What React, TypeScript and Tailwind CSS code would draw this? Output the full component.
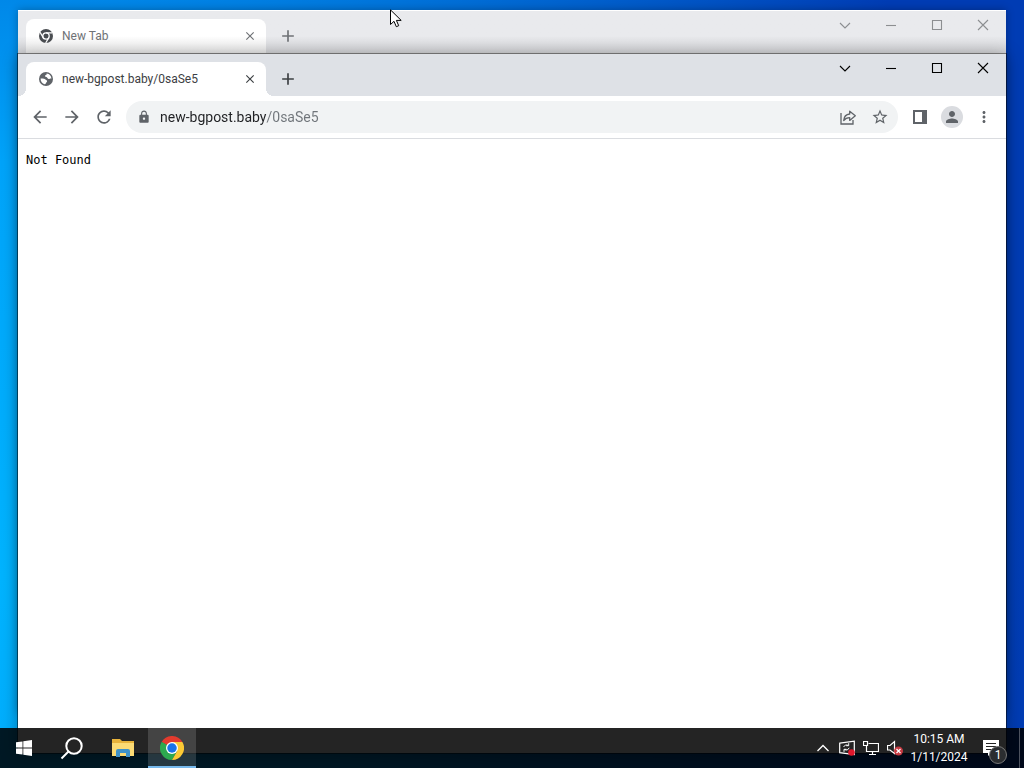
import type { ReactNode } from "react";
import {
  MdArrowBack,
  MdArrowForward,
  MdClose,
  MdAdd,
  MdLock,
  MdMoreVert,
  MdPerson,
  MdRefresh,
  MdStarBorder,
} from "react-icons/md";

function GlobeIcon() {
  return (
    <svg viewBox="0 0 16 16" className="size-4 text-[#5f6368]" fill="none">
      <circle cx="8" cy="8" r="7" fill="currentColor" />
      <path
        d="M2.600 7.600C4.500 7.200 6.300 7.300 7.200 8.300C7.700 9.200 9 9 9.100 10.100C9.200 11.200 8 11.400 7.800 12.300C7.700 13 7.300 13.400 6.600 13.200C4.300 12.700 2.400 10.500 2.600 7.600Z"
        fill="white"
      />
      <path
        d="M8.600 2.600C9 3.600 8.300 4 7.500 4.200C6.700 4.400 6.900 5.400 7.600 5.700C8.700 6.100 9.200 6.300 9.600 7.300C10 8.300 11.200 8.200 11.800 7.700C12.300 7.300 12.900 7.400 13.300 7.900C13.500 5.200 11.500 2.700 8.600 2.600Z"
        fill="white"
      />
    </svg>
  );
}

function ChromeMonoIcon() {
  return (
    <svg viewBox="0 0 16 16" className="size-4">
      <circle cx="8" cy="8" r="7" fill="#4a4d51" />
      <circle cx="8" cy="8" r="3.200" fill="#4a4d51" stroke="white" strokeWidth="1.300" />
      <path
        d="M8 4.800h6.300M5.200 9.600 2.100 4.200M10.800 9.600 7.700 15"
        stroke="white"
        strokeWidth="1.300"
      />
      <circle cx="8" cy="8" r="1.700" fill="#4a4d51" />
    </svg>
  );
}

function ChromeIcon() {
  return (
    <svg viewBox="0 0 48 48" className="size-6">
      <path d="M24 24 3.200 12A24 24 0 0 1 44.800 12Z" fill="#e33b2e" />
      <path d="M24 24V48A24 24 0 0 1 3.200 12Z" fill="#2da94f" />
      <path d="M13.600 30 3.200 12 24 24 34.400 30 24 48Z" fill="#2da94f" />
      <path d="M44.800 12H24L34.400 30 24 48A24 24 0 0 0 44.800 12Z" fill="#fcc934" />
      <circle cx="24" cy="24" r="12" fill="white" />
      <circle cx="24" cy="24" r="9.500" fill="#1a73e8" />
    </svg>
  );
}

function ShareIcon() {
  return (
    <svg viewBox="0 0 18 18" className="size-[18px]" fill="none" stroke="currentColor" strokeWidth="1.300">
      <path d="M2 5v11h12v-4" />
      <path d="M4.700 12.500C5 8.500 7 6.300 10.700 6V3.200L16.300 7.800l-5.600 4.600V9.600C8 9.600 6.200 10.400 4.700 12.500Z" strokeLinejoin="round" />
    </svg>
  );
}

function SidePanelIcon() {
  return (
    <svg viewBox="0 0 14 14" className="size-[14px]">
      <path d="M0 0h14v14H0ZM2 2v10h7V2Z" fill="currentColor" fillRule="evenodd" />
    </svg>
  );
}

function ToolButton({ label, children }: { label: string; children: ReactNode }) {
  return (
    <button
      aria-label={label}
      className="flex size-7 shrink-0 items-center justify-center rounded-full text-[#5f6368] hover:bg-black/5"
    >
      {children}
    </button>
  );
}

const captionButtons = [
  { label: "Search tabs", path: "M1 4l5 5 5-5" },
  { label: "Minimize", path: "M1 6.500h10" },
  { label: "Maximize", path: "M1.500 1.500h9v9h-9Z" },
  { label: "Close", path: "M1 1l10 10M11 1L1 11" },
];

function CaptionButtons() {
  return (
    <div className="ml-auto flex">
      {captionButtons.map((b) => (
        <button key={b.label} aria-label={b.label} className="flex h-7 w-[46px] items-center justify-center">
          <svg viewBox="0 0 12 12" className="size-3" fill="none" stroke="currentColor" strokeWidth="1.100">
            <path d={b.path} />
          </svg>
        </button>
      ))}
    </div>
  );
}

type TabStripProps = { title: string; icon: ReactNode; active?: boolean };

function TabStrip({ title, icon, active = false }: TabStripProps) {
  return (
    <div
      className={`flex h-[42px] pl-2 ${
        active ? "bg-[#dee1e6] text-black" : "bg-linear-to-b from-[#e9eaed] from-60% to-[#d2d3d6] text-[#8c8e91]"
      }`}
    >
      <div
        className={`relative mt-2 flex w-[240px] items-center rounded-t-lg pr-2 pl-3 ${
          active
            ? "bg-white text-[#3c4043] before:absolute before:bottom-0 before:-left-2 before:size-2 before:bg-[radial-gradient(circle_at_0_0,transparent_8px,white_8px)] after:absolute after:-right-2 after:bottom-0 after:size-2 after:bg-[radial-gradient(circle_at_100%_0,transparent_8px,white_8px)]"
            : "bg-linear-to-b from-white from-50% to-[#e8e8e8] text-[#6f7276]"
        }`}
      >
        {icon}
        <span className="ml-2 flex-1 truncate text-xs">{title}</span>
        <button aria-label={`Close ${title}`} className="flex size-4 items-center justify-center">
          <MdClose className="size-3.5" />
        </button>
      </div>
      <button
        aria-label="New tab"
        className={`mt-[11px] ml-2 flex size-7 items-center justify-center ${
          active ? "text-[#3c4043]" : "text-[#6f7276]"
        }`}
      >
        <MdAdd className="size-5" />
      </button>
      <CaptionButtons />
    </div>
  );
}

function Toolbar() {
  return (
    <div className="flex items-center gap-1 border-b border-[#dadce0] bg-white px-2 py-[5px]">
      <ToolButton label="Back">
        <MdArrowBack className="size-5" />
      </ToolButton>
      <ToolButton label="Forward">
        <MdArrowForward className="size-5" />
      </ToolButton>
      <ToolButton label="Reload">
        <MdRefresh className="size-5" />
      </ToolButton>
      <div className="mx-1 flex h-8 flex-1 items-center rounded-full bg-[#f1f3f4] pr-1 pl-[11px]">
        <MdLock className="size-3.5 shrink-0 text-[#5f6368]" />
        {/* host is drawn darker than the path */}
        <input
          aria-label="Address"
          defaultValue="new-bgpost.baby/0saSe5"
          className="ml-[9px] min-w-0 flex-1 bg-[linear-gradient(to_right,#202124_107px,#70757a_107px)] bg-clip-text text-sm text-transparent caret-black outline-none"
        />
        <div className="flex gap-1">
          <ToolButton label="Share">
            <ShareIcon />
          </ToolButton>
          <ToolButton label="Bookmark">
            <MdStarBorder className="size-[18px]" />
          </ToolButton>
        </div>
      </div>
      <ToolButton label="Side panel">
        <SidePanelIcon />
      </ToolButton>
      <ToolButton label="Profile">
        <span className="flex size-[22px] items-center justify-center rounded-full bg-[#dadce0]">
          <MdPerson className="size-[18px]" />
        </span>
      </ToolButton>
      <ToolButton label="Menu">
        <MdMoreVert className="size-[18px]" />
      </ToolButton>
    </div>
  );
}

function Taskbar() {
  return (
    <footer className="absolute inset-x-0 bottom-0 flex h-10 bg-black/86 text-white">
      <button aria-label="Start" className="flex w-12 items-center justify-center">
        <svg viewBox="0 0 16 16" className="size-4" fill="white">
          <path d="M0 2.300 6.500 1.400V7.600H0ZM7.300 1.300 16 0V7.600H7.300ZM0 8.400H6.500V14.600L0 13.700ZM7.300 8.400H16V16L7.300 14.700Z" />
        </svg>
      </button>
      <button aria-label="Search" className="flex w-12 items-center justify-center">
        <svg viewBox="0 0 24 24" className="size-6" fill="none" stroke="white" strokeWidth="2">
          <circle cx="14" cy="10" r="7.700" />
          <path d="M8.500 15.500 1.500 22.500" />
        </svg>
      </button>
      <button aria-label="File Explorer" className="ml-0.5 flex w-[50px] items-center justify-center">
        <svg viewBox="0 0 22 18" className="h-[18px] w-[22px]">
          <path d="M0 0h8l2 2h12v15H0Z" fill="#e8b33b" />
          <path d="M0 4h22v13H0Z" fill="#fcdb74" />
          <path d="M4 18v-6q0-2 2-2h10q2 0 2 2v6h-4v-4H8v4Z" fill="#3f92c8" />
        </svg>
      </button>
      <button
        aria-label="Google Chrome"
        className="flex w-12 items-center justify-center border-b-2 border-[#76b9ed] bg-white/15 pt-0.5"
      >
        <ChromeIcon />
      </button>

      <div className="ml-auto flex items-center">
        <button aria-label="Show hidden icons" className="flex w-6 justify-center">
          <svg viewBox="0 0 12 12" className="size-3" fill="none" stroke="white" strokeWidth="1.300">
            <path d="M.5 9 6 3.500 11.500 9" />
          </svg>
        </button>
        <button aria-label="Updates" className="flex w-6 justify-center">
          <svg viewBox="0 0 16 16" className="size-4" fill="none" stroke="white">
            <path d="M.7 3.200 15.300 1.200V14.500L.7 12.700Z" strokeWidth="1.200" />
            <path d="M4.500 7Q6.200 3.700 9.300 5.300M9.700 3.200V5.700H7.200M10.300 7.800Q8.700 11.300 5.500 9.700M5 11.800V9.300H7.500" />
            <circle cx="12.500" cy="12.500" r="3.300" fill="#e0182d" stroke="none" />
          </svg>
        </button>
        <button aria-label="Network" className="flex w-6 justify-center">
          <svg viewBox="0 0 16 16" className="size-4" fill="none" stroke="white" strokeWidth="1.200">
            <path d="M5.500 3.500H15.500V11.500H3.500V6M9.500 11.500V14.500M6 14.500H13" />
            <path d="M.5 1.500H4.500V5.500H.5Z" />
          </svg>
        </button>
        <button aria-label="Volume muted" className="flex w-6 justify-center">
          <svg viewBox="0 0 16 16" className="size-4" fill="none" stroke="white" strokeWidth="1.200">
            <path d="M.5 5.500H3L7.500 1.500V13.500L3 10H.5Z" />
            <circle cx="11.500" cy="11" r="4.500" fill="#c63a42" stroke="none" />
            <path d="M9.500 9l4 4M13.500 9l-4 4" />
          </svg>
        </button>
        <button className="flex w-16 flex-col items-center text-xs leading-[18px] whitespace-nowrap">
          <span>10:15 AM</span>
          <span>1/11/2024</span>
        </button>
        <button aria-label="Notifications" className="relative flex h-full w-10 items-center justify-center">
          <svg viewBox="0 0 16 16" className="size-4">
            <path d="M0 0h16v13h-8l-3 3v-3H0ZM3 3v1h10V3ZM3 6v1h10V6ZM3 9v1h7V9Z" fill="white" fillRule="evenodd" />
          </svg>
          <span className="absolute right-1 bottom-1 flex size-[18px] items-center justify-center rounded-full border border-[#777] bg-[#2b2d30] text-xs leading-none">
            1
          </span>
        </button>
        <div className="mr-1 ml-2 h-full w-px bg-white/30" />
      </div>
    </footer>
  );
}

export default function App() {
  return (
    <div className="relative h-screen overflow-hidden bg-[radial-gradient(ellipse_100%_150%_at_0%_75%,#00b4ff_0%,#00a4fa_36%,#0084e6_52%,#003cb4_100%)] font-[Roboto,'Open_Sans',sans-serif]">
      {/* Background window */}
      <section className="absolute inset-x-[18px] top-2.5 bottom-14 bg-white pt-px shadow-[0_0_8px_rgba(0,0,0,0.3)]">
        <TabStrip title="New Tab" icon={<ChromeMonoIcon />} />
      </section>

      {/* Focused window */}
      <section className="absolute inset-x-[18px] top-[54px] bottom-[15px] flex flex-col bg-white shadow-[0_0_0_1px_rgba(0,0,0,0.5),0_2px_16px_rgba(0,0,0,0.35)]">
        <TabStrip title="new-bgpost.baby/0saSe5" icon={<GlobeIcon />} active />
        <Toolbar />
        <main className="px-2 pt-[11px]">
          <pre className="font-['DejaVu_Sans_Mono',monospace] text-xs leading-5 text-black">Not Found</pre>
        </main>
      </section>

      <Taskbar />

      {/* Mouse pointer */}
      <svg viewBox="0 0 12 19" className="pointer-events-none absolute top-[9px] left-[390px] h-[19px] w-3">
        <path
          d="M.5.900V15.500L4 12.300 6.300 17.700 8.700 16.700 6.400 11.400H11.200Z"
          fill="white"
          stroke="black"
          strokeWidth="1"
        />
      </svg>
    </div>
  );
}
